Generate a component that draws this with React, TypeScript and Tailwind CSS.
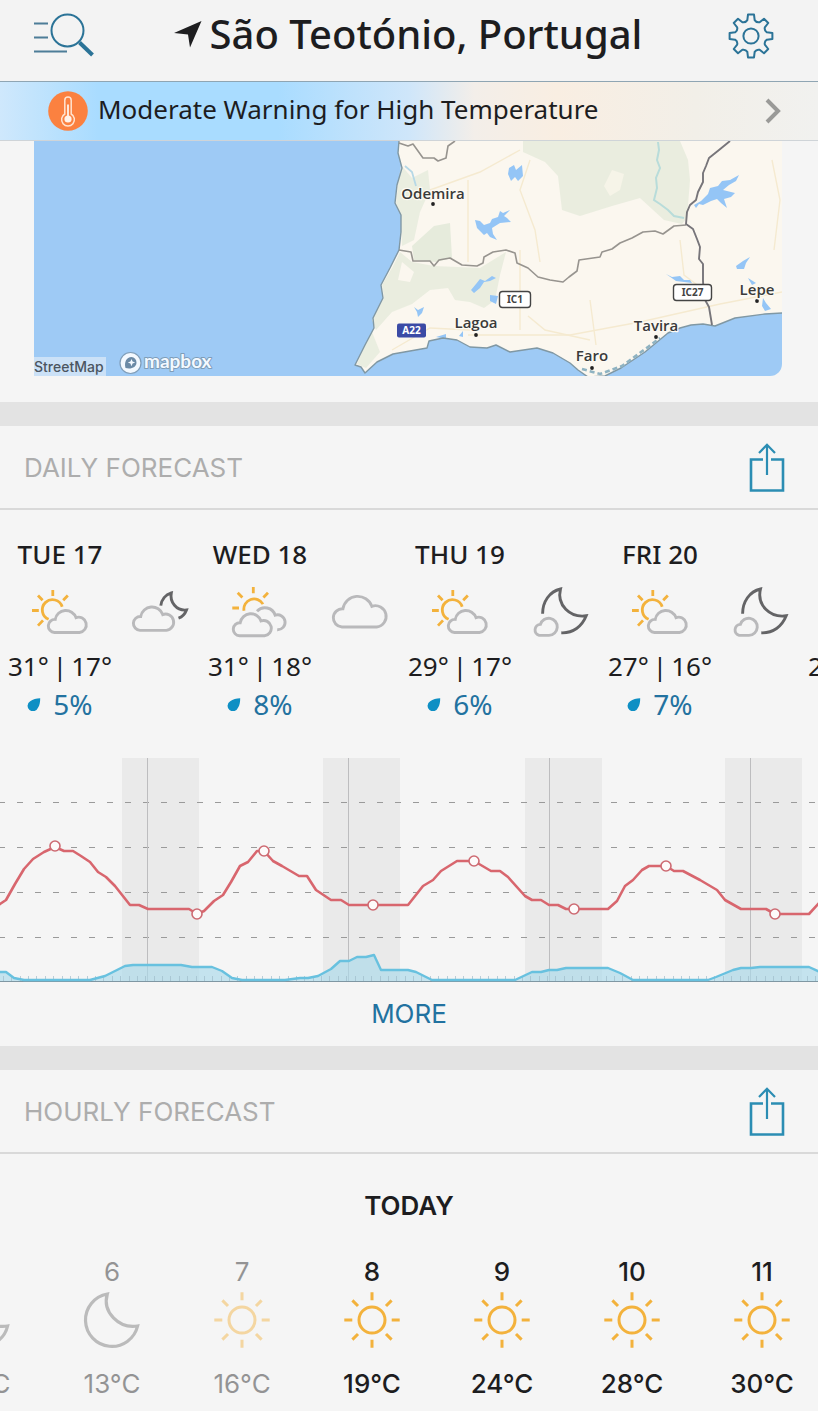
import React from "react";

type Pt = [number, number];

const toPath = (pts: Pt[]) => "M" + pts.map((p) => p.join(" ")).join("L");

/* ---------- icons ---------- */

function SearchIcon() {
  return (
    <svg width="60" height="46" viewBox="34 14 60 46" fill="none" stroke="#2b7397" aria-hidden="true">
      <path d="M34 24.5H48M34 38.5H48M34 52.5H67" stroke="#4d7d98" strokeWidth="2" />
      <circle cx="67.5" cy="31.5" r="16" strokeWidth="2" />
      <path d="M79.5 43.5L92.5 56" strokeWidth="4" />
    </svg>
  );
}

const gearPath = (() => {
  const at = (r: number, deg: number) => {
    const a = (deg * Math.PI) / 180;
    return `${(23 + r * Math.sin(a)).toFixed(2)} ${(23 - r * Math.cos(a)).toFixed(2)}`;
  };
  let d = "";
  for (let k = 0; k < 8; k++) {
    const c = k * 45;
    d += `${k === 0 ? "M" : "L"}${at(21.6, c - 8)}L${at(21.6, c + 8)}L${at(16.3, c + 13)}Q${at(14.2, c + 22.5)} ${at(16.3, c + 32)}`;
  }
  return d + "Z";
})();

function GearIcon() {
  return (
    <svg width="46" height="46" viewBox="0 0 46 46" fill="none" stroke="#2b7397" strokeWidth="2" strokeLinejoin="round" aria-hidden="true">
      <path d={gearPath} />
      <circle cx="23" cy="23" r="7.6" />
    </svg>
  );
}

function LocationArrow() {
  return (
    <svg width="28" height="28" viewBox="0 0 28 28" fill="#1e1e20" aria-hidden="true">
      <path d="M0 13L27.5 1L16 27.5L14 14.5Z" />
    </svg>
  );
}

function ThermometerBadge() {
  return (
    <svg width="40" height="40" viewBox="0 0 40 40" className="shrink-0" aria-hidden="true">
      <circle cx="20" cy="20" r="19.8" fill="#fb8140" />
      <path d="M16.8 23V9.2a3.2 3.2 0 0 1 6.4 0V23a6.4 6.4 0 1 1-6.4 0Z" fill="none" stroke="#ffe3cf" strokeWidth="1.5" />
      <circle cx="20" cy="28" r="3.6" fill="#fff3ea" />
      <path d="M20 28V13.5" stroke="#fff3ea" strokeWidth="1.8" />
    </svg>
  );
}

function ShareIcon() {
  return (
    <svg width="38" height="50" viewBox="0 0 38 50" fill="none" stroke="#2b8db3" strokeWidth="2.6" aria-hidden="true">
      <path d="M15 17.5H3V48.5H35V17.5H23" />
      <path d="M19 33V3M11 11L19 2.8L27 11" strokeWidth="2.2" />
    </svg>
  );
}

function Drop() {
  return (
    <svg width="14" height="14" viewBox="0 0 14 14" fill="#0f8fc4" aria-hidden="true">
      <path d="M13.2 1.2C13.2 4.5 12.8 8.2 11 10.8A5.4 5.4 0 1 1 3.2 4.2C5.8 2.2 9.4 1.4 13.2 1.2Z" />
    </svg>
  );
}

const CLOUD = "M24.5 50.5A6.5 6.5 0 0 1 25.2 37.4A10.8 10.8 0 0 1 46 35.6A7.7 7.7 0 1 1 49.5 50.5Z";
const SUN_COLOR = "#f3b23c";
const CLOUD_COLOR = "#b9b9bb";
const MOON_COLOR = "#646466";

type IconName = "sunCloud" | "sunClouds" | "nightCloud" | "cloud" | "moonCloud" | "moon" | "sun" | "none";

function WeatherIcon({ name }: { name: IconName }) {
  return (
    <svg width="60" height="60" viewBox="0 0 60 60" fill="none" strokeWidth="2.9" className="shrink-0" aria-hidden="true">
      {name === "sunCloud" && (
        <>
          <g stroke={SUN_COLOR} strokeWidth="2.8">
            <path d="M32.2 24.7A10.2 10.2 0 1 0 18.6 37.3" />
            <path d="M22.8 8V14M8 13.5L12.6 18.3M37.8 13.5L33.2 18.3M2 28.5H8.8M8 43.6L13 38.4" />
          </g>
          <path d={CLOUD} stroke={CLOUD_COLOR} />
        </>
      )}
      {name === "sunClouds" && (
        <>
          <g stroke={SUN_COLOR} strokeWidth="2.8">
            <path d="M14 28.8A10.2 10.2 0 0 1 33 22.2" />
            <path d="M23.3 5V11.2M7.7 10.7L12.4 15.4M38 10.7L33.4 15.4M2.3 26H9" />
          </g>
          <path d="M27 29.2A10.8 10.8 0 0 1 45.2 33.2A7.5 7.5 0 1 1 47.2 47.8" stroke={CLOUD_COLOR} />
          <path d={CLOUD} transform="translate(-15 3.3)" stroke={CLOUD_COLOR} />
        </>
      )}
      {name === "nightCloud" && (
        <>
          <path d="M30.8 23.6C31.5 17.5 35.5 12.5 41.3 11C39.5 20 46.5 29 56.5 28C55 32 52.5 34.8 48.5 36.2" stroke={MOON_COLOR} />
          <path d={CLOUD} transform="translate(-16 -5.2) scale(1.06)" stroke={CLOUD_COLOR} vectorEffect="non-scaling-stroke" />
        </>
      )}
      {name === "cloud" && (
        <path d={CLOUD} transform="translate(-22.1 -25.2) scale(1.39)" stroke={CLOUD_COLOR} vectorEffect="non-scaling-stroke" />
      )}
      {name === "moonCloud" && (
        <>
          <path d="M12.6 31.8C12.6 19.5 19.5 9.5 30.5 7C26.5 23 40 36 56.2 33.8C52 44.5 43 51.3 31.3 50.8" stroke={MOON_COLOR} />
          <path d="M9.2 53.4A5.6 5.6 0 0 1 10.4 42.4A8.6 8.6 0 1 1 19 53.4Z" stroke={CLOUD_COLOR} />
        </>
      )}
      {name === "moon" && (
        <path d="M25.3 4A26.4 26.4 0 1 0 55.6 36C37 39 20 22 25.3 4Z" stroke="#757577" strokeWidth="3.2" />
      )}
      {name === "sun" && (
        <g stroke={SUN_COLOR} strokeWidth="3">
          <circle cx="30" cy="30" r="13" />
          <path d="M30 2.3V10.3M30 49.7V57.7M2.3 30H10.3M49.7 30H57.7M10.4 10.4L16 16M44 44L49.6 49.6M10.4 49.6L16 44M44 16L49.6 10.4" />
        </g>
      )}
    </svg>
  );
}

/* ---------- map ---------- */

const LAND: Pt[] = [
  [399, 141], [398, 153], [402, 168], [397, 185], [395, 203], [401, 215], [401, 232], [399, 250], [390, 268], [381, 285],
  [383, 298], [373, 318], [374, 328], [365, 345], [355, 365], [361, 367], [365, 373], [377, 362], [393, 354], [410, 351],
  [427, 348], [429, 341], [443, 338], [457, 340], [470, 347], [487, 348], [496, 345], [510, 352], [537, 348], [553, 353],
  [570, 363], [578, 370], [588, 377], [605, 376], [621, 368], [645, 352], [668, 333], [680, 328], [691, 325], [703, 324],
  [715, 326], [735, 318], [765, 314], [783, 313],
];

const DISTRICTS: Pt[][] = [
  [[399, 143], [408, 146], [413, 144], [423, 158], [434, 158], [438, 161], [446, 158], [448, 146], [455, 141]],
  [[399, 250], [411, 252], [413, 261], [430, 261], [434, 266], [439, 260], [450, 258], [462, 265], [477, 266], [483, 263], [484, 257], [493, 252], [506, 250], [515, 253], [517, 263], [528, 268], [538, 277], [550, 280], [563, 282], [569, 277], [577, 271], [579, 260], [600, 257], [602, 252], [612, 249], [620, 243], [632, 238], [643, 232], [655, 231], [663, 234], [674, 226], [686, 225]],
];

const BORDER: Pt[] = [
  [730, 141], [719, 150], [709, 158], [706, 166], [703, 173], [703, 182], [698, 192], [696, 200], [690, 205], [687, 212],
  [686, 224], [693, 229], [697, 239], [700, 247], [699, 259], [703, 264], [703, 281], [704, 298], [709, 307], [712, 325],
];

function Town({ x, y, dx, dy, name }: { x: number; y: number; dx: number; dy: number; name: string }) {
  return (
    <>
      <circle cx={dx} cy={dy} r="1.9" fill="#222" />
      <text x={x} y={y} textAnchor="middle" fontSize="15" stroke="#fdfaf3" strokeWidth="2.5" paintOrder="stroke" strokeLinejoin="round" fill="#3a3a3a" className="font-['Open_Sans','Noto_Sans',sans-serif] font-semibold">
        {name}
      </text>
    </>
  );
}

function RegionMap() {
  return (
    <svg viewBox="34 141 748 235" className="block h-auto w-full rounded-br-xl font-['Noto_Sans','Open_Sans',sans-serif]" role="img" aria-label="Map of southern Portugal">
      <rect x="34" y="141" width="748" height="235" fill="#9ecaf5" />
      <path d={toPath([...LAND, [783, 141]]) + "Z"} fill="#fbf7ef" />
      <g fill="#e6ebdc">
        <path d="M523 141H680L688 160L690 180L687 218L682 224L664 220L640 198L612 206L580 216L562 210L558 176L545 162L523 152Z" opacity=".85" />
        <path d="M401 165L412 178L428 170L430 190L420 212L414 240L402 246L401 215L396 203L398 185Z" opacity=".8" />
        <path d="M412 246L434 226L450 223L452 258L436 262L414 260Z" />
        <path d="M400 252L412 262L434 266L480 268L506 252L500 275L495 300L484 308L470 302L455 300L448 288L430 290L412 304L392 312L376 330L372 320L384 298L382 285L392 268Z" opacity=".85" />
        <path d="M372 332L363 350L357 364L366 368L380 352Z" opacity=".8" />
      </g>
      <path d="M402 262L414 272L410 282L398 280Z" fill="#fbf7ef" />
      <path d="M612 170L624 174L620 190L610 196L604 186Z" fill="#f6f4e8" />
      <g fill="none" stroke="#f5ead0" strokeWidth="1.4">
        <path d="M520 250V330M468 335H570L640 322L720 304L782 292M392 350L430 328L470 330" />
        <path d="M430 190L480 172L520 150M468 180V262M540 262L535 230L520 190L530 160M772 160L780 200L774 250M680 240L684 275L704 290" />
        <path d="M528 316L545 330L590 340M590 300L596 345" />
      </g>
      <path d="M658 142L659 150L657 160L660 168L656 178L657 188L654 200L660 204L668 210L674 216L684 218" fill="none" stroke="#b8dcda" strokeWidth="2" />
      <path d="M405 166L412 172L416 186" fill="none" stroke="#b6d8e6" strokeWidth="1.8" />
      <g fill="#94c5f6">
        <path d="M509 168L514 165L516 170L522 165L523 176L518 181L515 177L511 181L508 174Z" />
        <path d="M475 220L480 221L484 225L490 223L492 219L498 217L500 211L503 213L510 210L504 216L507 218L511 222L500 223L492 228L493 234L497 240L490 237L487 233L484 235L481 232L477 228Z" />
        <path d="M471 290L476 284L480 279L485 281L492 276L496 278L490 281L484 282L480 288L474 293Z" />
        <path d="M490 295L498 296L496 304L490 301Z" />
        <path d="M414 307L418 310L424 307L422 313L418 317L417 312Z" />
        <path d="M694 205L701 201L708 194L710 188L718 186L722 181L730 180L739 175L736 181L729 185L723 190L735 193L731 197L724 199L727 208L721 203L717 199L711 201L703 205L699 204L696 208Z" />
        <path d="M666 274L672 277L680 276L684 280L690 280L692 283L684 282L676 281Z" />
        <path d="M736 266L743 261L750 257L746 263L744 269L737 269Z" />
        <path d="M748 278L756 283L752 285Z" />
        <path d="M763 298L766 303L771 309L765 311L762 306Z" />
        <path d="M436 337L446 334V339ZM459 336L463 331V337Z" />
      </g>
      <path d={toPath(LAND)} fill="none" stroke="#8098a4" strokeWidth="1.4" strokeLinejoin="round" />
      <path d="M582 369L600 374L622 366L648 347L660 338" fill="none" stroke="#8fb3c2" strokeWidth="2.6" strokeDasharray="5 3" />
      {DISTRICTS.map((d, i) => (
        <path key={i} d={toPath(d)} fill="none" stroke="#97948f" strokeWidth="1.6" strokeLinejoin="round" />
      ))}
      <path d={toPath(BORDER)} fill="none" stroke="#77757a" strokeWidth="1.9" strokeLinejoin="round" />

      <Town name="Odemira" x={433} y={199} dx={433} dy={204} />
      <Town name="Lagoa" x={476} y={328} dx={476} dy={335} />
      <Town name="Tavira" x={656} y={331} dx={656} dy={337} />
      <Town name="Faro" x={592} y={361} dx={592} dy={368} />
      <Town name="Lepe" x={757} y={295} dx={757} dy={301} />

      <g fontSize="10" textAnchor="middle" className="font-bold">
        <rect x="397" y="323.5" width="29" height="14" rx="2" fill="#3b4aa5" />
        <text x="411.5" y="334" fill="#fff">A22</text>
        <rect x="499.5" y="291.5" width="31" height="16" rx="3" fill="#fff" stroke="#444" strokeWidth="1.4" />
        <text x="515" y="303" fill="#444">IC1</text>
        <rect x="673.5" y="284.5" width="38" height="16" rx="3" fill="#fff" stroke="#444" strokeWidth="1.4" />
        <text x="692.5" y="296" fill="#444">IC27</text>
      </g>

      <rect x="34" y="357" width="72" height="19" fill="#cbe1f7" />
      <text x="34" y="372" fontSize="14" fill="#4b5560" className="font-['Inter',sans-serif] font-medium">StreetMap</text>
      <circle cx="130.5" cy="363" r="10.5" fill="#f3f9ff" stroke="#7f9db8" strokeWidth="1.2" />
      <path d="M125.500 368C124 362 126.500 357 131.500 357A5.400 5.400 0 0 1 136.500 362.500C136.500 367.500 131 369.500 125.500 368Z" fill="#6b8aa6" />
      <path d="M131.500 359L132.600 361.600L135.200 362.600L132.600 363.600L131.500 366.200L130.400 363.600L127.800 362.600L130.400 361.600Z" fill="#f3f9ff" />
      <text x="144" y="368" fontSize="19" fill="#f3f9ff" stroke="#7f9db8" strokeWidth="2" paintOrder="stroke" strokeLinejoin="round" className="font-['Lato',sans-serif] font-bold">mapbox</text>
    </svg>
  );
}

/* ---------- chart ---------- */

const TEMPERATURE: Pt[] = [
  [-2, 905], [0, 904], [6, 900], [15, 884], [24, 869], [33, 859], [44, 852], [55, 847], [64, 851], [73, 851], [81, 856], [90, 862],
  [98, 872], [106, 877], [115, 886], [130, 905], [139, 905], [148, 909], [189, 909], [197, 914], [204, 911], [214, 901],
  [223, 895], [231, 882], [240, 866], [248, 862], [257, 851], [264, 851], [273, 861], [282, 866], [299, 876], [307, 876],
  [316, 890], [331, 900], [341, 900], [349, 905], [408, 905], [423, 886], [433, 880], [441, 871], [457, 861], [474, 861],
  [491, 871], [500, 871], [508, 877], [525, 896], [532, 900], [541, 900], [549, 905], [558, 905], [566, 909], [608, 909],
  [617, 901], [625, 886], [633, 880], [642, 870], [649, 866], [666, 866], [674, 871], [683, 871], [700, 880], [717, 890],
  [725, 900], [741, 909], [766, 909], [775, 914], [809, 914], [820, 902],
];

const EXTREMES: Pt[] = [[55, 846], [197, 914], [264, 851], [373, 905], [474, 861], [574, 909], [666, 866], [775, 914]];

const RAIN: Pt[] = [
  [-2, 972], [6, 972], [14, 978], [24, 980], [90, 980], [105, 976], [125, 966], [133, 965], [181, 965], [192, 967], [212, 967],
  [222, 971], [232, 978], [242, 980], [285, 980], [300, 978], [308, 978], [318, 976], [331, 969], [340, 961], [349, 961],
  [357, 957], [366, 957], [374, 955], [381, 970], [408, 970], [416, 972], [432, 980], [515, 980], [532, 972], [541, 972],
  [549, 970], [557, 970], [566, 968], [608, 968], [620, 973], [633, 980], [708, 980], [716, 977], [733, 970], [741, 968],
  [751, 968], [760, 967], [809, 967], [820, 972],
];

const HOUR_TICKS = Array.from({ length: 98 }, (_, i) => Math.round(3 + i * 8.37) + 0.5);

function ForecastChart() {
  return (
    <svg viewBox="0 758 818 228" className="block h-auto w-full" role="img" aria-label="Temperature and precipitation for the coming days">
      {[122, 323, 525, 725].map((x) => (
        <rect key={x} x={x} y="758" width="77" height="223" fill="#eaeaea" />
      ))}
      {[802.5, 847.5, 892.5, 937.5].map((y) => (
        <path key={y} d={`M-1 ${y}H818`} stroke="#9a9a9a" strokeWidth="1" strokeDasharray="6 12" />
      ))}
      {[147.5, 348.5, 549.5, 750.5].map((x) => (
        <path key={x} d={`M${x} 758V981`} stroke="#bdbdbf" strokeWidth="1" />
      ))}
      <path d={toPath([...RAIN, [820, 981], [-2, 981]]) + "Z"} fill="#a9d8ea" fillOpacity=".65" />
      {HOUR_TICKS.map((x) => (
        <path key={x} d={`M${x} 976V981`} stroke="#9fbccb" strokeWidth="1" strokeOpacity=".7" />
      ))}
      <path d="M0 981.5H818" stroke="#7f97a3" strokeWidth="1" />
      <path d={toPath(RAIN)} fill="none" stroke="#68c1df" strokeWidth="2.4" strokeLinejoin="round" />
      <path d={toPath(TEMPERATURE)} fill="none" stroke="#d8666e" strokeWidth="2.6" strokeLinejoin="round" />
      {EXTREMES.map(([x, y]) => (
        <circle key={x} cx={x} cy={y} r="5" fill="#fdfafa" stroke="#cd6a72" strokeWidth="1.6" />
      ))}
    </svg>
  );
}

/* ---------- sections ---------- */

function SectionHeader({ title }: { title: string }) {
  return (
    <div className="flex items-center justify-between border-b-2 border-[#d9d9d9] py-4 pr-8 pl-6">
      <h2 className="pt-0.5 font-['Inter',sans-serif] text-[26px] leading-8 text-[#adadad]">{title}</h2>
      <button type="button" aria-label={`Share ${title.toLowerCase()}`} className="cursor-pointer">
        <ShareIcon />
      </button>
    </div>
  );
}

type Day = { label: string; day: IconName; night: IconName; high: string; low: string; rain: string };

const DAYS: Day[] = [
  { label: "TUE 17", day: "sunCloud", night: "nightCloud", high: "31°", low: "17°", rain: "5%" },
  { label: "WED 18", day: "sunClouds", night: "cloud", high: "31°", low: "18°", rain: "8%" },
  { label: "THU 19", day: "sunCloud", night: "moonCloud", high: "29°", low: "17°", rain: "6%" },
  { label: "FRI 20", day: "sunCloud", night: "moonCloud", high: "27°", low: "16°", rain: "7%" },
  { label: "", day: "none", night: "none", high: "27°", low: "16°", rain: "" },
];

function DayColumn({ d }: { d: Day }) {
  return (
    <li className="grid w-[200px] shrink-0 grid-cols-[100px_100px] justify-items-center whitespace-nowrap">
      <div className="col-start-1 h-8 text-[26px] leading-8 font-medium">{d.label}</div>
      <div className="col-start-1 mt-3">
        <WeatherIcon name={d.day} />
      </div>
      <div className="mt-3">
        <WeatherIcon name={d.night} />
      </div>
      <div className="col-start-1 mt-1.5 flex w-[106px] justify-center gap-1 justify-self-center text-[26px] leading-9">
        <span>{d.high}</span>
        <span>|</span>
        <span>{d.low}</span>
      </div>
      <div className="col-start-1 mt-0.5 flex h-9 items-center gap-3 text-[28px] leading-9 text-[#2272a0]">
        {d.rain && (
          <>
            <Drop />
            <span>{d.rain}</span>
          </>
        )}
      </div>
    </li>
  );
}

type Hour = { hour: string; icon: IconName; temp: string; past?: boolean };

const HOURS: Hour[] = [
  { hour: "5", icon: "moon", temp: "13°C", past: true },
  { hour: "6", icon: "moon", temp: "13°C", past: true },
  { hour: "7", icon: "sun", temp: "16°C", past: true },
  { hour: "8", icon: "sun", temp: "19°C" },
  { hour: "9", icon: "sun", temp: "24°C" },
  { hour: "10", icon: "sun", temp: "28°C" },
  { hour: "11", icon: "sun", temp: "30°C" },
];

function HourColumn({ h }: { h: Hour }) {
  return (
    <li className={h.past ? "flex w-[130px] shrink-0 flex-col items-center opacity-45" : "flex w-[130px] shrink-0 flex-col items-center font-medium"}>
      <span className="leading-8">{h.hour}</span>
      <div className="mt-0.5">
        <WeatherIcon name={h.icon} />
      </div>
      <span className="mt-[18px] leading-8">{h.temp}</span>
    </li>
  );
}

export default function App() {
  return (
    <div className="min-h-screen overflow-hidden bg-[#f5f5f5] font-['Noto_Sans','Open_Sans',sans-serif] text-[#1d1d1f]">
      <header className="flex items-center justify-between border-b border-[#8fa5b3] bg-[#f3f3f3] pt-3 pr-11 pb-[21px] pl-[34px]">
        <button type="button" aria-label="Search locations" className="cursor-pointer">
          <SearchIcon />
        </button>
        <h1 className="flex items-center gap-2 pb-1 text-[40px] leading-[44px] font-medium whitespace-nowrap">
          <LocationArrow />
          São Teotónio, Portugal
        </h1>
        <button type="button" aria-label="Settings" className="flex w-[52px] cursor-pointer justify-end">
          <GearIcon />
        </button>
      </header>

      <a href="#warning" className="flex items-center gap-2.5 border-b border-[#cfd4d8] bg-[linear-gradient(90deg,#cfe8fc_0%,#a9dcff_12%,#a9dcff_34%,#cfe6fa_50%,#f3eee9_58%,#f9eee2_68%,#f2efe8_85%,#f1f1ef_100%)] py-[9px] pr-9 pl-12">
        <ThermometerBadge />
        <span className="flex-1 pb-1 text-[26px] leading-9">Moderate Warning for High Temperature</span>
        <svg width="18" height="28" viewBox="0 0 18 28" fill="none" stroke="#9a9a98" strokeWidth="4" aria-hidden="true">
          <path d="M3 3L14 14L3 25" />
        </svg>
      </a>

      <section className="border-b-24 border-[#e3e3e3] pr-9 pb-[26px] pl-[34px]">
        <RegionMap />
      </section>

      <section className="border-b-24 border-[#e3e3e3]">
        <SectionHeader title="DAILY FORECAST" />
        <ul className="flex overflow-hidden pt-7 pb-9 pl-2.5">
          {DAYS.map((d, i) => (
            <DayColumn key={i} d={d} />
          ))}
        </ul>
        <ForecastChart />
        <div className="flex justify-center pt-3 pb-4">
          <button type="button" className="cursor-pointer font-['Inter',sans-serif] text-[26px] leading-8 text-[#2272a0]">
            MORE
          </button>
        </div>
      </section>

      <section className="font-['Inter',sans-serif] text-[26px]">
        <SectionHeader title="HOURLY FORECAST" />
        <h3 className="mt-9 text-center leading-8 font-semibold">TODAY</h3>
        <div className="overflow-hidden">
          <ul className="mt-[34px] -ml-[83px] flex pb-3">
            {HOURS.map((h) => (
              <HourColumn key={h.hour} h={h} />
            ))}
          </ul>
        </div>
      </section>
    </div>
  );
}
